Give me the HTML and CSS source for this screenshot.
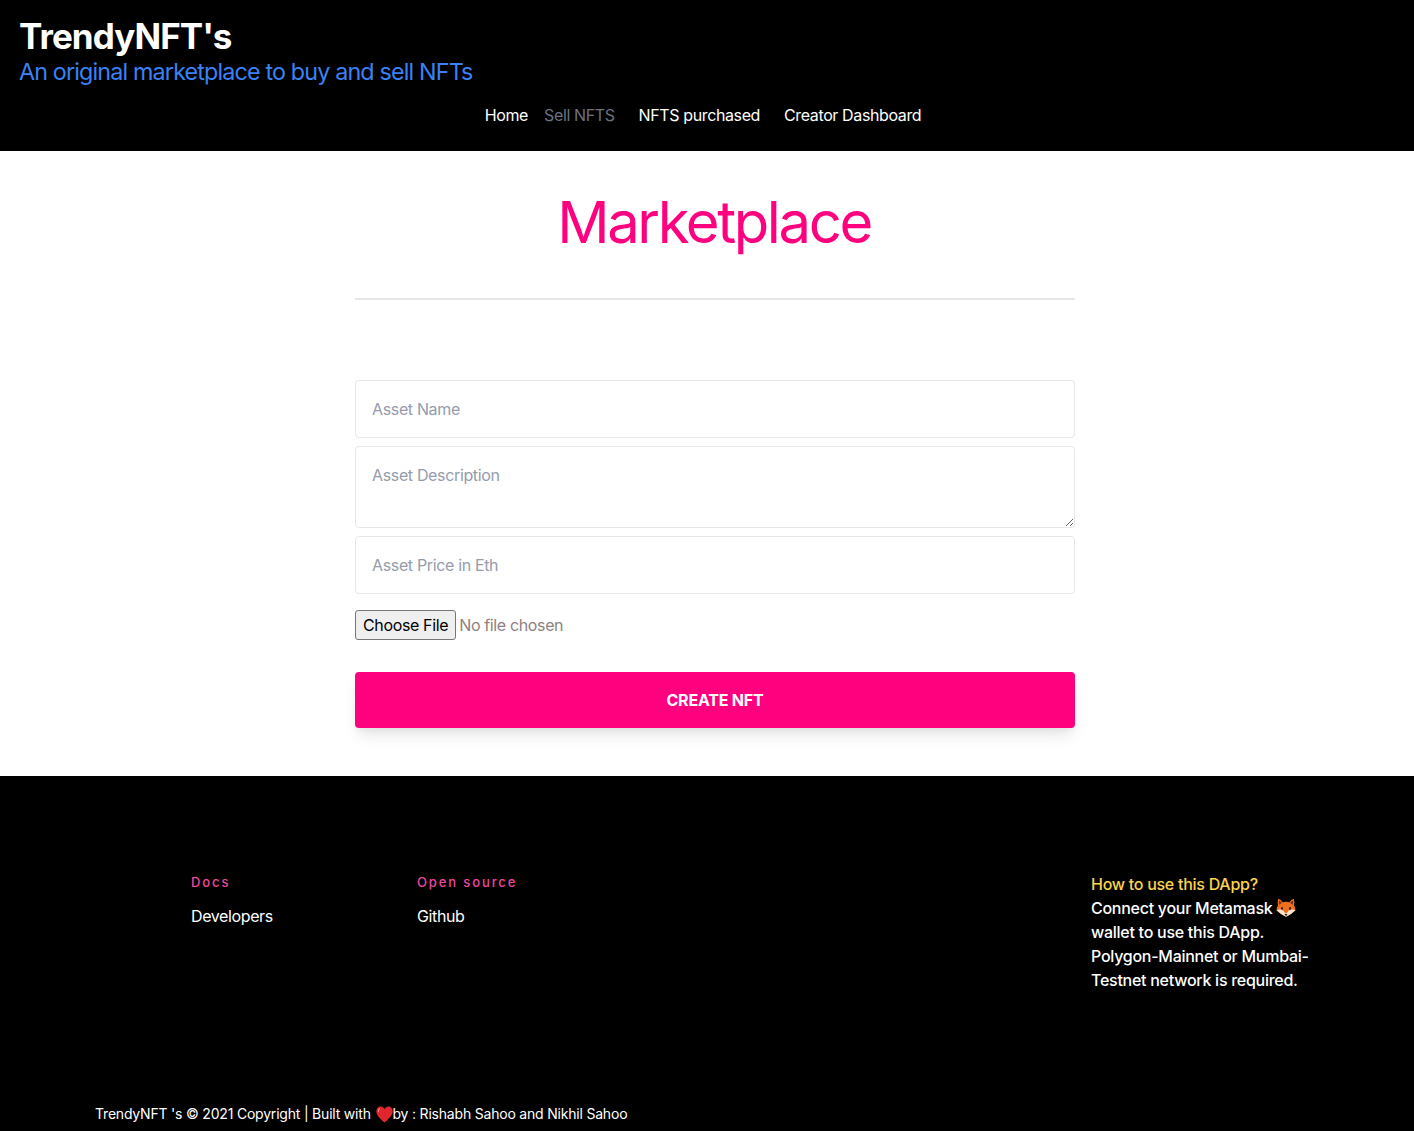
FILE: index.html
```html
<!DOCTYPE html>
<html lang="en">
<head>
    <meta charset="UTF-8">
    <meta name="viewport" content="width=device-width, initial-scale=1.0">
    <title>TrendyNFT's</title>
    <link rel="stylesheet" href="styles.css">
</head>
<body>
    <header class="site-header">
        <p class="brand">TrendyNFT's</p>
        <p class="tagline">An original marketplace to buy and sell NFTs</p>
        <nav class="nav">
            <a class="nav-link nav-home" href="#">Home</a>
            <a class="nav-link nav-active" href="#">Sell NFTS</a>
            <a class="nav-link" href="#">NFTS purchased</a>
            <a class="nav-link" href="#">Creator Dashboard</a>
        </nav>
    </header>

    <main class="main">
        <h1 class="page-title">Marketplace</h1>
        <hr class="divider">
        <form class="create-form">
            <input class="field" type="text" placeholder="Asset Name">
            <textarea class="field field-area" placeholder="Asset Description"></textarea>
            <input class="field" type="text" placeholder="Asset Price in Eth">
            <input class="file-input" type="file">
            <button class="create-btn" type="button">CREATE NFT</button>
        </form>
    </main>

    <footer class="site-footer">
        <div class="footer-cols">
            <div class="footer-col">
                <h2 class="footer-head">Docs</h2>
                <a class="footer-link" href="#">Developers</a>
            </div>
            <div class="footer-col">
                <h2 class="footer-head">Open source</h2>
                <a class="footer-link" href="#">Github</a>
            </div>
            <div class="footer-help">
                <span class="help-title">How to use this DApp?</span><br>
                Connect your Metamask
                <svg class="fox" viewBox="0 0 20 20" aria-hidden="true">
                    <path d="M2.2 .8 Q5 1.6 6.6 4.2 Q10 3.2 13.4 4.2 Q15 1.6 17.8 .8 Q18.8 4 18 7.6 Q19.6 10 19.4 12.4 Q15 16.4 10 18.8 Q5 16.4 .6 12.4 Q.4 10 2 7.6 Q1.2 4 2.2 .8 Z" fill="#f0701e"/>
                    <path d="M3 2.4 Q5 3.2 5.8 5 L3.4 6.8 Q2.6 4.6 3 2.4 Z M17 2.4 Q15 3.2 14.2 5 L16.6 6.8 Q17.4 4.6 17 2.4 Z" fill="#7a3412"/>
                    <path d="M.6 12.2 Q4.4 10.4 7.4 12.8 Q8.4 15 10 15.4 Q11.6 15 12.6 12.8 Q15.6 10.4 19.4 12.2 Q15 16.6 10 18.8 Q5 16.6 .6 12.2 Z" fill="#f9e6d0"/>
                    <path d="M8.5 16 H11.5 L10 18.2 Z" fill="#2b1a14"/>
                    <ellipse cx="6" cy="10.4" rx="1" ry="1.4" fill="#2b1a14"/>
                    <ellipse cx="14" cy="10.4" rx="1" ry="1.4" fill="#2b1a14"/>
                </svg><br>
                wallet to use this DApp.<br>
                Polygon-Mainnet or Mumbai-<br>
                Testnet network is required.
            </div>
        </div>
        <p class="copyright">TrendyNFT 's © 2021 Copyright | Built with
            <svg class="heart" viewBox="0 0 20 18" preserveAspectRatio="none" aria-hidden="true">
                <path d="M10 17.6 C4 13 .4 9.6 .4 5.6 C.4 2.6 2.7 .4 5.4 .4 C7.3 .4 9 1.4 10 3.2 C11 1.4 12.7 .4 14.6 .4 C17.3 .4 19.6 2.6 19.6 5.6 C19.6 9.6 16 13 10 17.6 Z" fill="#e0252c"/>
                <path d="M4 3 Q2.6 4 2.8 6" fill="none" stroke="#ff8a8a" stroke-width="1.2" stroke-linecap="round"/>
            </svg><span>by : Rishabh Sahoo and Nikhil Sahoo</span></p>
    </footer>
</body>
</html>
```

FILE: styles.css
```css
* {
    box-sizing: border-box;
}
body {
    margin: 0;
    font-family: Inter, "Noto Sans", sans-serif;
    font-size: 16px;
    line-height: 24px;
    color: #000;
    background: #fff;
}
a {
    color: inherit;
    text-decoration: none;
}
.site-header {
    height: 151px;
    padding: 16px 19px 0;
    background: #000;
}
.brand {
    margin: 0;
    font-size: 35px;
    line-height: 40px;
    font-weight: 700;
    letter-spacing: -0.93px;
    color: #fff;
}
.tagline {
    margin: 0;
    font-size: 23.3px;
    line-height: 32px;
    letter-spacing: -0.84px;
    color: #3b82f6;
}
.nav {
    display: flex;
    justify-content: center;
    margin-top: 15px;
    padding-left: 16px;
    letter-spacing: -0.38px;
}
.nav-link {
    margin-right: 24px;
    color: #fff;
}
.nav-home {
    margin-right: 16px;
}
.nav-active {
    color: #6b7280;
}
.main {
    height: 625px;
    padding-left: 16px;
}
.page-title {
    margin: 0;
    padding: 41px 2px 0 0;
    font-size: 58px;
    line-height: 60px;
    font-weight: 400;
    letter-spacing: -2.4px;
    text-align: center;
    color: #ff007f;
}
.divider {
    width: 720px;
    height: 2px;
    margin: 46px auto 0;
    border: 0;
    background: #e5e7eb;
}
.create-form {
    display: flex;
    flex-direction: column;
    width: 720px;
    margin: 80px auto 0;
}
.field {
    display: block;
    width: 100%;
    height: 58px;
    margin-bottom: 8px;
    padding: 16px;
    border: 1px solid #e5e7eb;
    border-radius: 4px;
    font: inherit;
    letter-spacing: -0.35px;
    color: #000;
    background: #fff;
}
.field::placeholder {
    color: #959cab;
}
.field-area {
    height: 82px;
}
.file-input {
    height: 30px;
    margin: 8px 0 32px;
    font: inherit;
    letter-spacing: -0.36px;
    color: #8f8080;
}
.file-input::file-selector-button {
    height: 30px;
    margin-right: 3px;
    padding: 0 7px;
    border: 1px solid #767676;
    border-radius: 3px;
    font: inherit;
    letter-spacing: -0.36px;
    color: #000;
    background: #efefef;
}
.create-btn {
    height: 56px;
    border: 0;
    border-radius: 4px;
    font: inherit;
    font-weight: 700;
    letter-spacing: -0.2px;
    color: #fff;
    background: #ff007f;
    box-shadow: 0 10px 15px -3px rgba(0,0,0,0.1), 0 4px 6px -2px rgba(0,0,0,0.05);
}
.site-footer {
    height: 355px;
    padding-top: 96px;
    background: #000;
    color: #fff;
}
.footer-cols {
    display: flex;
    height: 232px;
    padding-left: 191px;
}
.footer-col {
    width: 226px;
}
.footer-head {
    margin: 0 0 12px;
    font-size: 13px;
    line-height: 20px;
    font-weight: 500;
    letter-spacing: 0.145em;
    color: #ec4899;
}
.footer-link {
    display: block;
    letter-spacing: -0.38px;
}
.footer-help {
    width: 230px;
    margin-left: 448px;
    font-weight: 500;
    letter-spacing: -0.27px;
}
.help-title {
    color: #fcd34d;
}
.fox {
    width: 20px;
    height: 20px;
    vertical-align: -4px;
}
.copyright {
    margin: 0;
    padding-left: 95px;
    font-size: 14px;
    line-height: 20px;
    letter-spacing: -0.2px;
}
.heart {
    width: 17px;
    height: 17px;
    margin-left: 1px;
    vertical-align: -4px;
}
```
